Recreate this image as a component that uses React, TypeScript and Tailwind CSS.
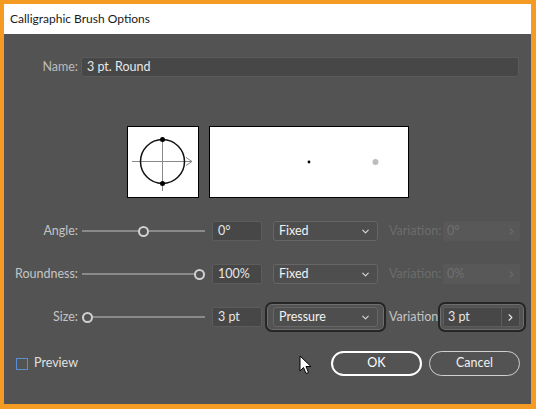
import { ChevronDown, ChevronRight } from 'lucide-react';

const font = { fontFamily: 'Lato, "Open Sans", sans-serif' };

function Slider({ pos }: { pos: number }) {
  // pos: thumb left offset in px inside a 123px track
  return (
    <div className="relative w-[123px] h-[11px] flex items-center">
      <div className="w-full h-[2px] bg-[#8a8a8a]" />
      <div
        className="absolute top-0 w-[11px] h-[11px] rounded-full border-2 border-[#d0d0d0] bg-[#535353]"
        style={{ left: pos }}
      />
    </div>
  );
}

function Field({ value }: { value: string }) {
  return (
    <div className="w-[50px] h-[20px] rounded-[2px] bg-[#474747] border border-[#5c5c5c] flex items-center pl-[5px] text-[12.5px] text-[#e6e6e6]">
      {value}
    </div>
  );
}

function Select({ value }: { value: string }) {
  return (
    <div className="w-[105px] h-[20px] rounded-[3px] bg-[#4e4e4e] border border-[#666] flex items-center justify-between pl-[5px] pr-[6px] text-[12.5px] text-[#f2f2f2]">
      <span>{value}</span>
      <ChevronDown size={11} strokeWidth={2.5} className="text-[#d8d8d8]" />
    </div>
  );
}

// focus ring drawn around the active controls of the Size row
function Ring({ children, tight }: { children: React.ReactNode; tight?: boolean }) {
  return (
    <div
      className={`-my-[5px] py-[3px] rounded-[7px] border-2 border-[#262626] shadow-[inset_0_0_0_1px_#6e6e6e] ${
        tight ? '-ml-[5px] -mr-[6px] pl-[3px] pr-[4px]' : '-mx-[8px] px-[6px]'
      }`}
    >
      {children}
    </div>
  );
}

function VariationBox({ value, disabled }: { value: string; disabled?: boolean }) {
  return (
    <div
      className={`w-[77px] h-[20px] rounded-[2px] flex items-center text-[12.5px] ${
        disabled ? 'bg-[#585858] text-[#707070]' : 'bg-[#474747] border border-[#5c5c5c] text-[#e6e6e6]'
      }`}
    >
      <span className="flex-1 pl-[4px]">{value}</span>
      <div className={`h-full w-[18px] flex items-center justify-center ${disabled ? '' : 'border-l border-[#5c5c5c]'}`}>
        <ChevronRight size={11} strokeWidth={2.5} className={disabled ? 'text-[#6a6a6a]' : 'text-[#e6e6e6]'} />
      </div>
    </div>
  );
}

function Row({
  label,
  pos,
  value,
  mode,
  varLabel,
  varValue,
  active,
}: {
  label: string;
  pos: number;
  value: string;
  mode: string;
  varLabel: string;
  varValue: string;
  active?: boolean;
}) {
  return (
    <div className="h-[30px] flex items-center">
      <div className="w-[74px] text-right text-[12.5px] text-[#c4c4c4]">{label}</div>
      <div className="ml-[4px]">
        <Slider pos={pos} />
      </div>
      <div className="ml-[7px]">
        <Field value={value} />
      </div>
      <div className="ml-[11px]">{active ? <Ring><Select value={mode} /></Ring> : <Select value={mode} />}</div>
      <div className={`ml-[11px] w-[54px] text-[12.5px] ${active ? 'text-[#c4c4c4]' : 'text-[#6c6c6c]'}`}>{varLabel}</div>
      <div>{active ? <Ring tight><VariationBox value={varValue} /></Ring> : <VariationBox value={varValue} disabled />}</div>
    </div>
  );
}

export default function App() {
  return (
    <div
      style={font}
      className="relative w-[536px] h-[409px] flex flex-col border-t-4 border-l-4 border-r-[5px] border-b-[5px] border-[#f59a23]"
    >
      <div className="h-[30px] bg-white flex items-center pl-[6px] text-[12px] text-[#1a1a1a]">
        Calligraphic Brush Options
      </div>
      <div className="flex-1 bg-[#535353] flex flex-col">
        <div className="mt-[23px] flex items-center h-[20px]">
          <div className="w-[74px] text-right text-[12.5px] text-[#bcbcbc]">Name:</div>
          <div className="ml-[3px] w-[438px] h-[20px] rounded-[3px] bg-[#474747] border border-[#5a5a5a] flex items-center pl-[5px] text-[12.5px] text-[#e8e8e8]">
            3 pt. Round
          </div>
        </div>

        <div className="mt-[49px] flex justify-center gap-[10px]">
          <div className="w-[72px] h-[72px] bg-white border border-black">
            <svg width="70" height="70" viewBox="0 0 70 70">
              <line x1="4" y1="34.5" x2="64" y2="34.5" stroke="#8a8a8a" strokeWidth="1" />
              <polyline points="58,30.5 64,34.5 58,38.5" fill="none" stroke="#8a8a8a" strokeWidth="1" />
              <line x1="34.5" y1="10" x2="34.5" y2="64" stroke="#8a8a8a" strokeWidth="1" />
              <circle cx="34.5" cy="34.5" r="22" fill="none" stroke="#111" strokeWidth="1.5" />
              <circle cx="34.5" cy="12.5" r="2.5" fill="#000" />
              <circle cx="34.5" cy="56.5" r="2.5" fill="#000" />
            </svg>
          </div>
          <div className="w-[200px] h-[72px] bg-white border border-black">
            <svg width="198" height="70" viewBox="0 0 198 70">
              <circle cx="99" cy="35" r="1.4" fill="#000" />
              <circle cx="165.5" cy="35" r="3" fill="#bdbdbd" />
            </svg>
          </div>
        </div>

        <div className="mt-[18px] flex flex-col gap-[13px]">
          <Row label="Angle:" pos={56} value="0°" mode="Fixed" varLabel="Variation:" varValue="0°" />
          <Row label="Roundness:" pos={112} value="100%" mode="Fixed" varLabel="Variation:" varValue="0%" />
          <Row label="Size:" pos={0} value="3 pt" mode="Pressure" varLabel="Variation" varValue="3 pt" active />
        </div>

        <div className="mt-[19px] h-[25px] flex items-center">
          <div className="ml-[12px] w-[12px] h-[12px] border border-[#5b8fd4]" />
          <span className="ml-[6px] text-[12.5px] text-[#e0e0e0]">Preview</span>
          <div className="ml-auto flex gap-[7px] mr-[11px]">
            <button className="w-[91px] h-[25px] rounded-full border-2 border-white text-[12.5px] text-white">OK</button>
            <button className="w-[91px] h-[25px] rounded-full border border-[#d0d0d0] text-[12.5px] text-[#f0f0f0]">Cancel</button>
          </div>
        </div>
      </div>

      <svg className="absolute left-[295px] top-[351px]" width="14" height="20" viewBox="0 0 14 20">
        <path d="M1 1 L1 16 L4.5 12.5 L7 18.5 L9.5 17.5 L7 11.5 L12 11.5 Z" fill="#fff" stroke="#000" strokeWidth="1" strokeLinejoin="round" />
      </svg>
    </div>
  );
}
